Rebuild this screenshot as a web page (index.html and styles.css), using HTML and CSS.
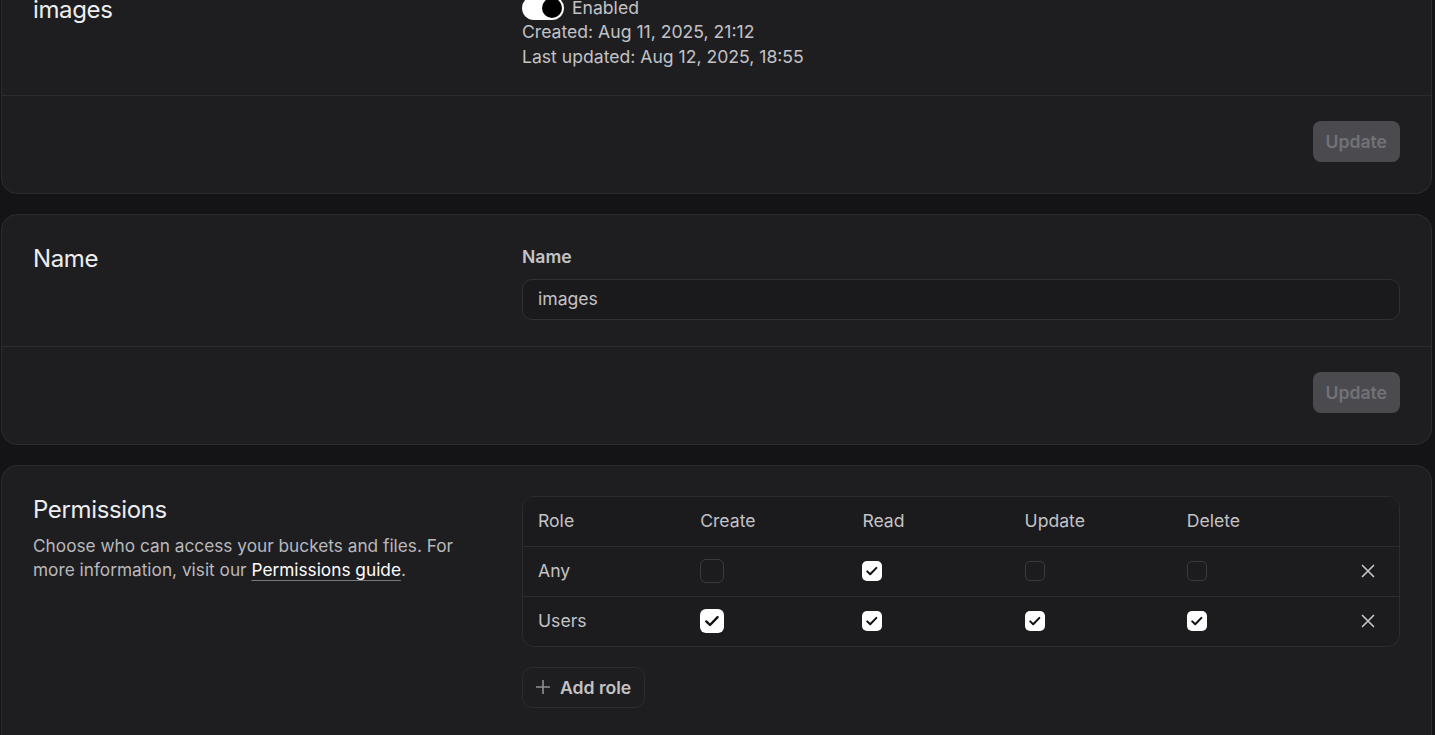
FILE: index.html
```html
<!DOCTYPE html>
<html lang="en">
<head>
<meta charset="utf-8">
<title>Bucket settings</title>
<link rel="stylesheet" href="styles.css">
</head>
<body>
<main class="page">
  <section class="card">
    <div class="card-body">
      <div class="card-side"><h2 class="card-title">images</h2></div>
      <div class="card-main">
        <div class="toggle-row">
          <span class="toggle"><span class="knob"></span></span>
          <span class="toggle-label">Enabled</span>
        </div>
        <p class="meta">Created: Aug 11, 2025, 21:12</p>
        <p class="meta">Last updated: Aug 12, 2025, 18:55</p>
      </div>
    </div>
    <div class="card-footer"><button class="btn-update" disabled>Update</button></div>
  </section>

  <section class="card">
    <div class="card-body">
      <div class="card-side"><h2 class="card-title">Name</h2></div>
      <div class="card-main">
        <label class="field-label">Name</label>
        <div class="input">images</div>
      </div>
    </div>
    <div class="card-footer"><button class="btn-update" disabled>Update</button></div>
  </section>

  <section class="card card-last">
    <div class="card-body">
      <div class="card-side">
        <h2 class="card-title">Permissions</h2>
        <p class="desc">Choose who can access your buckets and files. For more information, visit our <a class="link" href="#">Permissions guide</a>.</p>
      </div>
      <div class="card-main">
        <div class="table">
          <div class="row row-head">
            <div class="cell">Role</div>
            <div class="cell">Create</div>
            <div class="cell">Read</div>
            <div class="cell">Update</div>
            <div class="cell">Delete</div>
            <div class="cell"></div>
          </div>
          <div class="row">
            <div class="cell">Any</div>
            <div class="cell"><span class="cb cb-lg"></span></div>
            <div class="cell"><svg class="cb-svg" width="20" height="20" viewBox="0 0 20 20"><rect width="20" height="20" rx="5" fill="#fff"/><path d="M5.2 10.4l3 2.9 6.2-6.4" fill="none" stroke="#111" stroke-width="2" stroke-linecap="round" stroke-linejoin="round"/></svg></div>
            <div class="cell"><span class="cb"></span></div>
            <div class="cell"><span class="cb"></span></div>
            <div class="cell cell-x"><svg width="14" height="14" viewBox="0 0 14 14"><path d="M1.5 1.5l11 11M12.5 1.5l-11 11" stroke="#c3c3c6" stroke-width="1.7" stroke-linecap="round"/></svg></div>
          </div>
          <div class="row">
            <div class="cell">Users</div>
            <div class="cell"><svg class="cb-svg" width="24" height="24" viewBox="0 0 24 24"><rect width="24" height="24" rx="6" fill="#fff"/><path d="M6.3 12.4l3.7 3.6 7.6-7.8" fill="none" stroke="#111" stroke-width="2.4" stroke-linecap="round" stroke-linejoin="round"/></svg></div>
            <div class="cell"><svg class="cb-svg" width="20" height="20" viewBox="0 0 20 20"><rect width="20" height="20" rx="5" fill="#fff"/><path d="M5.2 10.4l3 2.9 6.2-6.4" fill="none" stroke="#111" stroke-width="2" stroke-linecap="round" stroke-linejoin="round"/></svg></div>
            <div class="cell"><svg class="cb-svg" width="20" height="20" viewBox="0 0 20 20"><rect width="20" height="20" rx="5" fill="#fff"/><path d="M5.2 10.4l3 2.9 6.2-6.4" fill="none" stroke="#111" stroke-width="2" stroke-linecap="round" stroke-linejoin="round"/></svg></div>
            <div class="cell"><svg class="cb-svg" width="20" height="20" viewBox="0 0 20 20"><rect width="20" height="20" rx="5" fill="#fff"/><path d="M5.2 10.4l3 2.9 6.2-6.4" fill="none" stroke="#111" stroke-width="2" stroke-linecap="round" stroke-linejoin="round"/></svg></div>
            <div class="cell cell-x"><svg width="14" height="14" viewBox="0 0 14 14"><path d="M1.5 1.5l11 11M12.5 1.5l-11 11" stroke="#c3c3c6" stroke-width="1.7" stroke-linecap="round"/></svg></div>
          </div>
        </div>
        <button class="btn-add">
          <svg width="14" height="14" viewBox="0 0 14 14"><path d="M7 0.5v13M0.5 7h13" stroke="#8f8f94" stroke-width="1.6" stroke-linecap="round"/></svg>
          <span>Add role</span>
        </button>
      </div>
    </div>
  </section>
</main>
</body>
</html>
```
FILE: styles.css
```css
* { box-sizing: border-box; }

html, body {
  margin: 0;
  background: #141416;
  overflow: hidden;
}

body {
  font-family: Inter, "Noto Sans", sans-serif;
  font-size: 17.6px;
  line-height: 1.4;
  color: #c3c3c6;
}

.page {
  display: flex;
  flex-direction: column;
  gap: 20px;
  margin-top: -35px;
  padding-left: 1px;
  width: 1432px;
}

.card {
  background: #1e1e21;
  border: 1px solid #2c2c30;
  border-radius: 16px;
}

.card-last {
  height: 320px;
}

.card-body {
  display: grid;
  grid-template-columns: 457px 1fr;
  column-gap: 32px;
  padding: 30px 31px 26px;
}

.card-title {
  margin: 0;
  font-size: 24px;
  line-height: 28px;
  font-weight: 400;
  color: #ededf0;
  letter-spacing: -0.015em;
}

.card-main {
  display: flex;
  flex-direction: column;
  align-items: flex-start;
}

.toggle-row {
  display: flex;
  align-items: center;
  gap: 8px;
  height: 24px;
}

.toggle {
  width: 42px;
  height: 24px;
  border-radius: 12px;
  background: #ffffff;
  display: flex;
  align-items: center;
  justify-content: flex-end;
  padding: 0 2px;
}

.knob {
  width: 20px;
  height: 20px;
  border-radius: 50%;
  background: #000;
}

.toggle-label { color: #c3c3c6; }

.meta {
  margin: 0;
}

.card-footer {
  border-top: 1px solid #2c2c30;
  padding: 25px 31px 31px;
  display: flex;
  justify-content: flex-end;
}

.btn-update {
  height: 41px;
  padding: 0 13px;
  border: none;
  border-radius: 8px;
  background: #4a4a4f;
  color: #727277;
  font-family: inherit;
  font-size: 17.6px;
  font-weight: 600;
}

.field-label {
  display: block;
  font-weight: 600;
  color: #c3c3c6;
  margin-bottom: 9px;
}

.input {
  width: 100%;
  height: 41px;
  border: 1px solid #313135;
  border-radius: 10px;
  background: #1a1a1d;
  padding: 0 15px;
  display: flex;
  align-items: center;
  color: #c3c3c6;
}

.desc {
  margin: 10px 0 0;
  font-size: 17.25px;
  color: #b9b9bd;
}

.link {
  color: #ffffff;
  text-decoration: underline;
  text-decoration-color: #77777c;
  text-underline-offset: 4px;
  text-decoration-thickness: 1px;
}

.table {
  width: 100%;
  border: 1px solid #2c2c30;
  border-radius: 12px;
  overflow: hidden;
  background: #1c1c1f;
}

.row {
  display: grid;
  grid-template-columns: repeat(5, 162.2px) 1fr;
  align-items: center;
  height: 50px;
  border-bottom: 1px solid #2c2c30;
}

.row:last-child {
  border-bottom: none;
  height: 49px;
}

.row-head { background: #1b1b1e; }

.cell {
  padding-left: 15px;
  display: flex;
  align-items: center;
}

.cell-x {
  justify-content: flex-end;
  padding-right: 24px;
}

.cb {
  width: 20px;
  height: 20px;
  border: 1px solid #3a3a3e;
  border-radius: 5px;
}

.cb-lg {
  width: 24px;
  height: 24px;
  border-radius: 6px;
}

.cb-svg { display: block; }

.btn-add {
  margin-top: 20px;
  height: 41px;
  padding: 0 13px;
  display: flex;
  align-items: center;
  gap: 10px;
  border: 1px solid #2c2c30;
  border-radius: 10px;
  background: transparent;
  color: #c3c3c6;
  font-family: inherit;
  font-size: 17.6px;
  font-weight: 600;
}
```
